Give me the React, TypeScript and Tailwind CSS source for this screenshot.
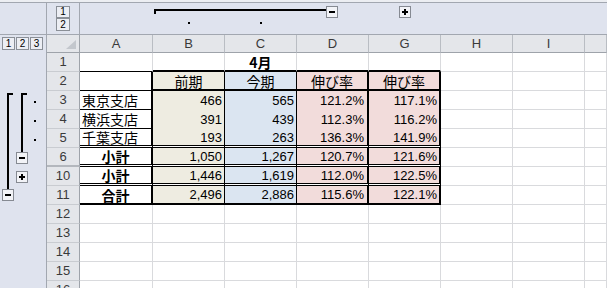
import React from "react";

type OutlineKind = "none" | "start" | "mid" | "innerEnd" | "innerPlus" | "outerEnd";

type RowDef = {
  n: number;
  outline: OutlineKind;
  cells?: { a?: React.ReactNode; b?: React.ReactNode; c?: React.ReactNode; d?: React.ReactNode; g?: React.ReactNode };
  style?: "r1" | "r2" | "body" | "dbl" | "last";
  boldA?: boolean;
};

const JP = "font-['Noto_Sans_CJK_JP',sans-serif] text-[14px] leading-none";
const NUM = "font-['Liberation_Sans',sans-serif] text-[13px] leading-none";

const rows: RowDef[] = [
  { n: 1, outline: "none", style: "r1", cells: { c: "4月" } },
  { n: 2, outline: "none", style: "r2", cells: { b: "前期", c: "今期", d: "伸び率", g: "伸び率" } },
  { n: 3, outline: "start", style: "body", cells: { a: "東京支店", b: "466", c: "565", d: "121.2%", g: "117.1%" } },
  { n: 4, outline: "mid", style: "body", cells: { a: "横浜支店", b: "391", c: "439", d: "112.3%", g: "116.2%" } },
  { n: 5, outline: "mid", style: "dbl", cells: { a: "千葉支店", b: "193", c: "263", d: "136.3%", g: "141.9%" } },
  { n: 6, outline: "innerEnd", style: "dbl", boldA: true, cells: { a: "小計", b: "1,050", c: "1,267", d: "120.7%", g: "121.6%" } },
  { n: 10, outline: "innerPlus", style: "dbl", boldA: true, cells: { a: "小計", b: "1,446", c: "1,619", d: "112.0%", g: "122.5%" } },
  { n: 11, outline: "outerEnd", style: "last", boldA: true, cells: { a: "合計", b: "2,496", c: "2,886", d: "115.6%", g: "122.1%" } },
  { n: 12, outline: "none" },
  { n: 13, outline: "none" },
  { n: 14, outline: "none" },
  { n: 15, outline: "none" },
  { n: 16, outline: "none" },
];

function OutlineBtn({ plus }: { plus?: boolean }) {
  return (
    <div className="w-[12px] h-[12px] shrink-0 border border-[#868a92] bg-[#f2f3f7] flex items-center justify-center">
      <svg width="6" height="6" viewBox="0 0 6 6">
        {plus ? <path d="M0 2h6v2H0zM2 0h2v6H2z" fill="#000" /> : <path d="M0 2h6v2H0z" fill="#000" />}
      </svg>
    </div>
  );
}

function LevelBtn({ label, className = "" }: { label: string; className?: string }) {
  return (
    <div
      className={`shrink-0 border border-[#8a8f97] bg-[#eceef4] flex items-center justify-center font-['Liberation_Sans',sans-serif] text-[10px] leading-none text-black ${className}`}
    >
      {label}
    </div>
  );
}

function Dot() {
  return <div className="w-[2px] h-[2px] bg-black" />;
}

function OutlineCell({ kind }: { kind: OutlineKind }) {
  const line1 = <div className="ml-[7px] w-[2px] h-full bg-black" />;
  const line2 = <div className="ml-[6px] w-[2px] h-full bg-black" />;
  const dot = (
    <div className="pt-[10px] pl-[5px]">
      <Dot />
    </div>
  );
  return (
    <div className="w-[47px] shrink-0 flex bg-[#dfe3ee] border-r border-[#a2a7b0]">
      <div className="w-[15px] shrink-0 flex flex-col">
        {kind === "start" && <div className="ml-[7px] mt-[2px] w-[6px] flex-1 border-l-2 border-t-2 border-black" />}
        {(kind === "mid" || kind === "innerEnd" || kind === "innerPlus") && line1}
        {kind === "outerEnd" && (
          <>
            <div className="ml-[7px] w-[2px] h-[3px] bg-black" />
            <div className="ml-[2px]">
              <OutlineBtn />
            </div>
          </>
        )}
      </div>
      <div className="w-[14px] shrink-0 flex flex-col">
        {kind === "start" && <div className="ml-[6px] mt-[2px] w-[6px] flex-1 border-l-2 border-t-2 border-black" />}
        {kind === "mid" && line2}
        {kind === "innerEnd" && (
          <>
            <div className="ml-[6px] w-[2px] h-[4px] bg-black" />
            <div className="ml-[1px]">
              <OutlineBtn />
            </div>
          </>
        )}
        {kind === "innerPlus" && (
          <div className="ml-[1px] mt-[4px]">
            <OutlineBtn plus />
          </div>
        )}
      </div>
      <div className="flex-1">{(kind === "start" || kind === "mid") && dot}</div>
    </div>
  );
}

const GRID = "border-r border-b border-[#d9dadd]";

function cellClasses(style: RowDef["style"], col: "a" | "b" | "c" | "d" | "g") {
  const fill = col === "b" ? "bg-[#eeece1]" : col === "c" ? "bg-[#dbe5f1]" : "bg-[#f2dcdb]";
  if (!style) return GRID;
  if (style === "r1") {
    if (col === "a") return "border-r border-b border-r-[#d9dadd] border-b-black";
    return "border-r border-b-2 border-r-[#d9dadd] border-b-black";
  }
  const right = col === "b" || col === "c" ? "border-r" : "border-r-2";
  const bg = col === "a" ? "" : `${fill} bg-clip-padding`;
  let bottom = "";
  if (style === "r2") bottom = col === "a" ? "border-b" : "border-b-2";
  else if (style === "body") bottom = col === "a" ? "border-b" : "";
  else if (style === "dbl") bottom = "border-b-[3px] [border-bottom-style:double]";
  else if (style === "last") bottom = "border-b-2";
  return `${right} ${bottom} border-black ${bg}`;
}

function SheetRow({ r }: { r: RowDef }) {
  const cells = r.cells ?? {};
  const s = r.style;
  return (
    <div className="flex h-[19px] shrink-0">
      <OutlineCell kind={r.outline} />
      <div
        className={`w-[33px] shrink-0 flex items-center justify-center bg-[#e4e6ea] border-r border-r-[#9ea3aa] ${
          r.n === 6 ? "border-b-2 border-b-[#b3b7bd]" : "border-b border-b-[#c9ccd1]"
        } font-['Liberation_Sans',sans-serif] text-[13px] text-[#3a3a3a]`}
      >
        {r.n}
      </div>
      <div
        className={`w-[73px] shrink-0 flex items-center ${cellClasses(s, "a")} ${JP} ${
          r.boldA ? "justify-center font-bold" : "pl-[2px]"
        }`}
      >
        {cells.a}
      </div>
      <div
        className={`w-[72px] shrink-0 flex items-center ${cellClasses(s, "b")} ${
          s === "r2" ? `${JP} justify-center` : `${NUM} justify-end pr-[2px]`
        }`}
      >
        {cells.b}
      </div>
      <div
        className={`w-[72px] shrink-0 flex items-center ${cellClasses(s, "c")} ${
          s === "r2" ? `${JP} justify-center` : s === "r1" ? `${JP} justify-center font-bold` : `${NUM} justify-end pr-[2px]`
        }`}
      >
        {cells.c}
      </div>
      <div
        className={`w-[72px] shrink-0 flex items-center ${cellClasses(s, "d")} ${
          s === "r2" ? `${JP} justify-center` : `${NUM} justify-end pr-[3px]`
        }`}
      >
        {cells.d}
      </div>
      <div
        className={`w-[72px] shrink-0 flex items-center ${cellClasses(s, "g")} ${
          s === "r2" ? `${JP} justify-center` : `${NUM} justify-end pr-[2px]`
        }`}
      >
        {cells.g}
      </div>
      <div className={`w-[72px] shrink-0 ${GRID}`} />
      <div className={`w-[72px] shrink-0 ${GRID}`} />
      <div className={`flex-1 ${GRID}`} />
    </div>
  );
}

const HEAD =
  "shrink-0 flex items-center justify-center bg-[#e4e6ea] border-r border-r-[#b9bdc3] border-b border-b-[#9ea3aa] font-['Liberation_Sans',sans-serif] text-[13px] text-[#3a3a3a]";

export default function App() {
  return (
    <div className="w-[607px] h-[288px] overflow-hidden bg-white flex flex-col text-black font-['Noto_Sans_CJK_JP',sans-serif]">
      {/* top outline band */}
      <div className="h-[2px] shrink-0 bg-[#eceef2]" />
      <div className="h-[33px] shrink-0 flex bg-[#dfe3ee] border-t border-b border-[#a2a7b0]">
        <div className="w-[47px] shrink-0 border-r border-[#a2a7b0]" />
        <div className="w-[33px] shrink-0 border-r border-[#a2a7b0] flex flex-col items-center pt-[3px]">
          <LevelBtn label="1" className="w-[14px] h-[12px]" />
          <LevelBtn label="2" className="w-[14px] h-[13px]" />
        </div>
        <div className="flex-1 flex flex-col pt-[3px]">
          <div className="h-[12px] flex">
            <div className="w-[73px] shrink-0" />
            <div className="w-[72px] shrink-0 flex flex-col">
              <div className="ml-[1px] mt-[3px] h-[5px] border-l-2 border-t-2 border-black" />
            </div>
            <div className="w-[72px] shrink-0 flex flex-col">
              <div className="mt-[3px] h-[2px] bg-black" />
            </div>
            <div className="w-[72px] shrink-0 flex items-start">
              <div className="mt-[3px] w-[29px] h-[2px] bg-black" />
              <OutlineBtn />
            </div>
            <div className="w-[72px] shrink-0 flex justify-center">
              <OutlineBtn plus />
            </div>
          </div>
          <div className="h-[13px] flex">
            <div className="w-[73px] shrink-0" />
            <div className="w-[72px] shrink-0 flex justify-center pt-[4px]">
              <Dot />
            </div>
            <div className="w-[72px] shrink-0 flex justify-center pt-[4px]">
              <Dot />
            </div>
          </div>
        </div>
      </div>

      {/* column headers */}
      <div className="h-[18px] shrink-0 flex">
        <div className="w-[47px] shrink-0 bg-[#dfe3ee] border-r border-[#a2a7b0] flex gap-[1px] pl-[2px] pt-[2px]">
          <LevelBtn label="1" className="w-[13px] h-[13px]" />
          <LevelBtn label="2" className="w-[13px] h-[13px]" />
          <LevelBtn label="3" className="w-[13px] h-[13px]" />
        </div>
        <div className="w-[33px] shrink-0 bg-[#e4e6ea] border-r border-b border-[#9ea3aa] flex items-end justify-end pr-[3px] pb-[3px]">
          <svg width="10" height="9" viewBox="0 0 10 9">
            <path d="M10 0V9H0z" fill="#c3c7cd" />
          </svg>
        </div>
        <div className={`w-[73px] ${HEAD}`}>A</div>
        <div className={`w-[72px] ${HEAD}`}>B</div>
        <div className={`w-[72px] ${HEAD}`}>C</div>
        <div className={`w-[72px] ${HEAD} border-r-[#8e939a]`}>D</div>
        <div className={`w-[72px] ${HEAD}`}>G</div>
        <div className={`w-[72px] ${HEAD}`}>H</div>
        <div className={`w-[72px] ${HEAD}`}>I</div>
        <div className={`flex-1 ${HEAD}`} />
      </div>

      {/* sheet rows */}
      {rows.map((r) => (
        <SheetRow key={r.n} r={r} />
      ))}
    </div>
  );
}
